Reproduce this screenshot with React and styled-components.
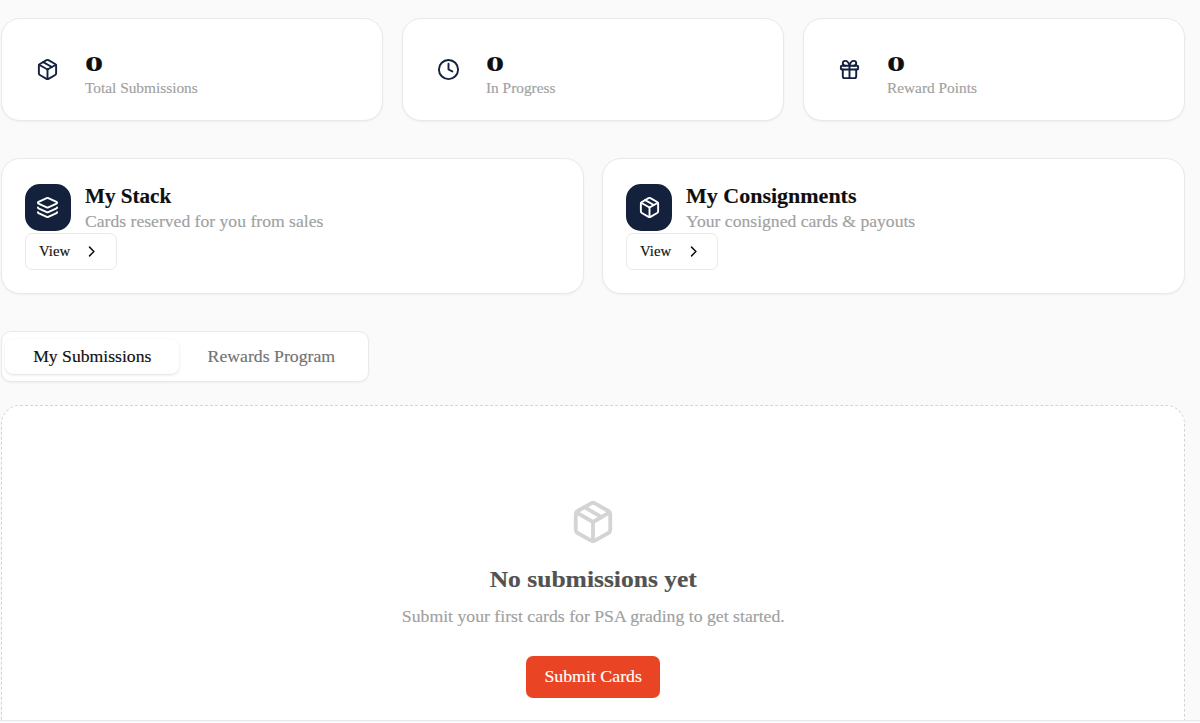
import React from "react";
import styled, { createGlobalStyle } from "styled-components";
import { ChevronRight, Clock, Gift, Layers, Package } from "lucide-react";

const GlobalStyle = createGlobalStyle`
  * {
    box-sizing: border-box;
  }
  body {
    margin: 0;
    background: #fafafa;
    overflow: hidden;
    font-family: Georgia, "Liberation Serif", serif;
    color: #0f0f10;
  }
  button {
    font-family: inherit;
    cursor: pointer;
  }
`;

const Page = styled.main`
  height: 723px;
  padding: 18px 14.6px 0 0.8px;
  display: flex;
  flex-direction: column;
  overflow: hidden;
`;

const Grid = styled.div`
  display: grid;
  grid-template-columns: repeat(${(props) => props.$columns}, 1fr);
  gap: 18.5px;
  margin-bottom: 37px;
`;

const Card = styled.section`
  background: #fff;
  border: 1px solid #e9e9ea;
  border-radius: 19px;
  box-shadow: 0 1px 2px rgba(0, 0, 0, 0.05);
`;

const Wide = styled.span`
  display: inline-block;
  white-space: nowrap;
  transform: scaleX(${(props) => props.$scale});
  transform-origin: ${(props) => props.$origin || "left"};
  -webkit-text-stroke: 0.15px currentColor;
`;

const StatCard = styled(Card)`
  height: 103px;
  padding: 0 34.5px;
  display: flex;
  align-items: center;
  gap: 25.5px;
  color: #14213d;
`;

const StatBody = styled.div`
  padding-top: 9px;
`;

const StatValue = styled.div`
  height: 26px;
  font-size: 22px;
  font-weight: 700;
  line-height: 26px;
  color: #0f0f10;
`;

const StatLabel = styled.div`
  margin-top: 2px;
  font-size: 14.3px;
  line-height: 19px;
  color: #a1a1a1;
`;

const LinkCard = styled(Card)`
  height: 136px;
  padding: 25px 23px;
`;

const LinkHeader = styled.div`
  display: flex;
  gap: 14px;
  height: 49px;
`;

const IconTile = styled.div`
  width: 46px;
  height: 47px;
  border-radius: 15px;
  background: #14213d;
  color: #fff;
  display: flex;
  align-items: center;
  justify-content: center;
`;

const LinkTitle = styled.h3`
  margin: 0;
  font-size: 20px;
  line-height: 24px;
`;

const LinkText = styled.p`
  margin: 2px 0 0;
  font-size: 16.5px;
  line-height: 23px;
  color: #a1a1a1;
`;

const ViewButton = styled.button`
  width: 92px;
  height: 37px;
  padding: 0 15px 0 13px;
  display: flex;
  align-items: center;
  gap: 14px;
  background: #fff;
  border: 1px solid #e9e9ea;
  border-radius: 7px;
  font-size: 14.5px;
  color: #0f0f10;
`;

const Tabs = styled.div`
  width: 368px;
  height: 51px;
  padding: 0 4px 0 3.5px;
  display: flex;
  align-items: center;
  background: #fff;
  border: 1px solid #e9e9ea;
  border-radius: 10px;
  box-shadow: 0 1px 2px rgba(0, 0, 0, 0.05);
`;

const Tab = styled.button`
  width: ${(props) => props.$width};
  height: 35px;
  padding: 0;
  border: 0;
  border-radius: 8px;
  background: ${(props) => (props.$active ? "#fff" : "transparent")};
  box-shadow: ${(props) =>
    props.$active
      ? "0 1px 3px rgba(0, 0, 0, 0.1), 0 1px 2px -1px rgba(0, 0, 0, 0.1)"
      : "none"};
  font-size: 16.5px;
  color: ${(props) => (props.$active ? "#0f0f10" : "#737373")};
`;

const EmptyState = styled.section`
  flex: none;
  height: 315px;
  margin-top: 23px;
  padding-top: 93px;
  display: flex;
  flex-direction: column;
  align-items: center;
  background: #fff;
  border: 1px dashed #d4d4d4;
  border-bottom: 0;
  border-radius: 19px 19px 0 0;
  color: #d4d4d4;
`;

const EmptyTitle = styled.h2`
  margin: 21px 0 0;
  font-size: 22.5px;
  line-height: 28px;
  color: #525252;
`;

const EmptyText = styled.p`
  margin: 11px 0 0;
  font-size: 16.5px;
  line-height: 24px;
  color: #a1a1a1;
`;

const SubmitButton = styled.button`
  width: 134px;
  height: 42px;
  margin-top: 27px;
  padding: 0;
  border: 0;
  border-radius: 7px;
  background: #e94424;
  font-size: 16.5px;
  color: #fff;
`;

const Footer = styled.footer`
  flex: none;
  height: 3px;
  margin: 0 -14.6px 0 -0.8px;
  background: #f9fafb;
  border-top: 1px solid #e5e7eb;
`;

const stats = [
  { icon: Package, value: 0, label: "Total Submissions" },
  { icon: Clock, value: 0, label: "In Progress" },
  { icon: Gift, value: 0, label: "Reward Points" },
];

const links = [
  {
    icon: Layers,
    title: "My Stack",
    text: "Cards reserved for you from sales",
    titleScale: 1.055,
  },
  {
    icon: Package,
    title: "My Consignments",
    text: "Your consigned cards & payouts",
    titleScale: 1.1,
  },
];

const Stat = ({ icon: Icon, value, label }) => (
  <StatCard>
    <Icon size={23} />
    <StatBody>
      <StatValue>
        <Wide $scale={1.65}>{value}</Wide>
      </StatValue>
      <StatLabel>
        <Wide $scale={1.073}>{label}</Wide>
      </StatLabel>
    </StatBody>
  </StatCard>
);

const LinkBox = ({ icon: Icon, title, text, titleScale }) => (
  <LinkCard>
    <LinkHeader>
      <IconTile>
        <Icon size={23} />
      </IconTile>
      <div>
        <LinkTitle>
          <Wide $scale={titleScale}>{title}</Wide>
        </LinkTitle>
        <LinkText>
          <Wide $scale={1.068}>{text}</Wide>
        </LinkText>
      </div>
    </LinkHeader>
    <ViewButton>
      <Wide $scale={1.02}>View</Wide>
      <ChevronRight size={19} />
    </ViewButton>
  </LinkCard>
);

const App = () => (
  <>
    <GlobalStyle />
    <Page>
      <Grid $columns={3}>
        {stats.map((stat) => (
          <Stat key={stat.label} {...stat} />
        ))}
      </Grid>
      <Grid $columns={2}>
        {links.map((link) => (
          <LinkBox key={link.title} {...link} />
        ))}
      </Grid>
      <Tabs>
        <Tab $active $width="174px">
          <Wide $scale={1.07} $origin="center">
            My Submissions
          </Wide>
        </Tab>
        <Tab $width="184px">
          <Wide $scale={1.075} $origin="center">
            Rewards Program
          </Wide>
        </Tab>
      </Tabs>
      <EmptyState>
        <Package size={46} />
        <EmptyTitle>
          <Wide $scale={1.135} $origin="center">
            No submissions yet
          </Wide>
        </EmptyTitle>
        <EmptyText>
          <Wide $scale={1.074} $origin="center">
            Submit your first cards for PSA grading to get started.
          </Wide>
        </EmptyText>
        <SubmitButton>
          <Wide $scale={1.08} $origin="center">
            Submit Cards
          </Wide>
        </SubmitButton>
      </EmptyState>
      <Footer />
    </Page>
  </>
);

export default App;
